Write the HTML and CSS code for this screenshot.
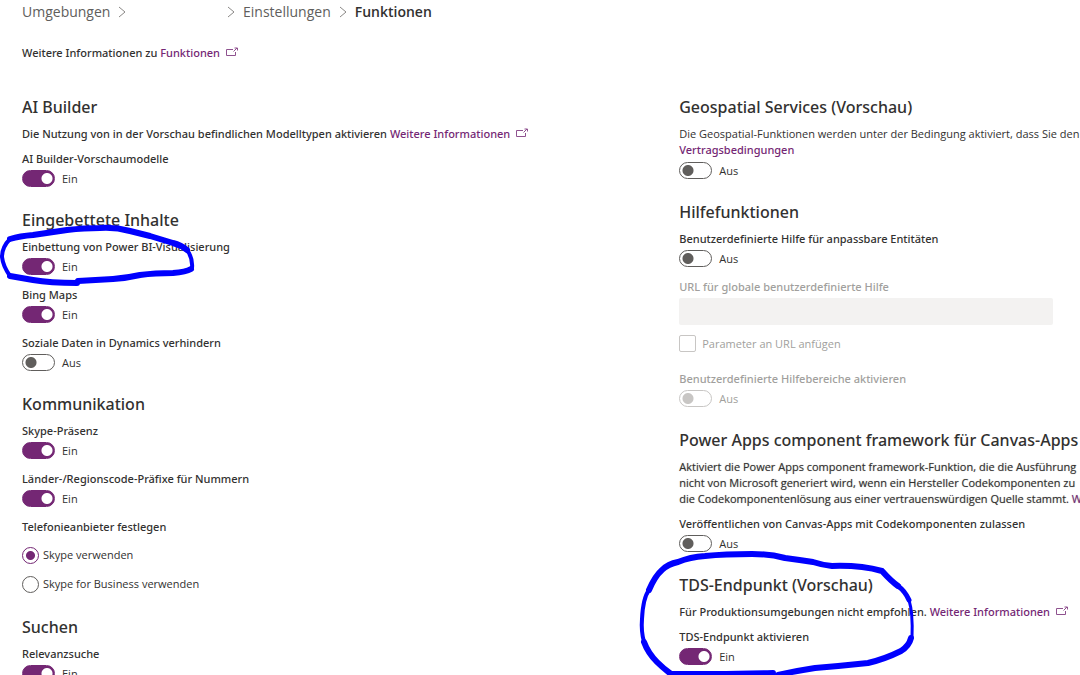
FILE: index.html
```html
<!DOCTYPE html>
<html lang="de">
<head>
<meta charset="utf-8">
<title>Funktionen</title>
<link rel="stylesheet" href="styles.css">
</head>
<body>
<svg class="sprite" aria-hidden="true">
  <symbol id="open" viewBox="0 0 12 10"><path d="M7 2.500H.5v6h9V5M7.500 4.500l3.500-3.500M8.500 1H11.500V3.500" fill="none" stroke="currentColor"/></symbol>
  <symbol id="chevron" viewBox="0 0 8 12"><path d="M1 1l6 5-6 5" fill="none" stroke="currentColor"/></symbol>
</svg>
<div class="page">
  <nav class="breadcrumb" aria-label="Navigationspfad">
    <span class="crumb crumb-env"><a href="#">Umgebungen</a><svg class="chevron"><use href="#chevron"/></svg></span>
    <svg class="chevron"><use href="#chevron"/></svg>
    <a href="#">Einstellungen</a>
    <svg class="chevron"><use href="#chevron"/></svg>
    <strong class="current">Funktionen</strong>
  </nav>
  <p class="intro">Weitere Informationen zu <a href="#">Funktionen<svg class="open"><use href="#open"/></svg></a></p>

  <main class="columns">
    <div class="column">
      <section>
        <h2>AI Builder</h2>
        <p class="desc">Die Nutzung von in der Vorschau befindlichen Modelltypen aktivieren <a href="#">Weitere Informationen<svg class="open"><use href="#open"/></svg></a></p>
        <div class="setting"><label for="ai">AI Builder-Vorschaumodelle</label><div class="switch"><input id="ai" type="checkbox" role="switch" checked><span>Ein</span></div></div>
      </section>
      <section class="marked">
        <h2>Eingebettete Inhalte</h2>
        <div class="setting"><label for="bi">Einbettung von Power BI-Visualisierung</label><div class="switch"><input id="bi" type="checkbox" role="switch" checked><span>Ein</span></div></div>
        <div class="setting"><label for="bing">Bing Maps</label><div class="switch"><input id="bing" type="checkbox" role="switch" checked><span>Ein</span></div></div>
        <div class="setting"><label for="social">Soziale Daten in Dynamics verhindern</label><div class="switch"><input id="social" type="checkbox" role="switch"><span>Aus</span></div></div>
        <svg class="ink ink-embed" viewBox="0 0 200 64" aria-hidden="true">
          <path d="M77 61Q50 61 33 58L10 54" stroke-width="6"/>
          <path d="M10 54Q3 44 2 35Q2 25 10 17" stroke-width="4"/>
          <path d="M10 17Q20 14 33 13L67 8Q85 6 100 6Q115 5 130 9L150 14L173 21Q181 23 187 28" stroke-width="6"/>
          <path d="M187 28Q193 36 192 46" stroke-width="4"/>
          <path d="M191 47Q186 50 173 51Q155 51 140 53Q127 56 113 57L78 59" stroke-width="6"/>
        </svg>
      </section>
      <section>
        <h2>Kommunikation</h2>
        <div class="setting"><label for="skype">Skype-Präsenz</label><div class="switch"><input id="skype" type="checkbox" role="switch" checked><span>Ein</span></div></div>
        <div class="setting"><label for="prefix">Länder-/Regionscode-Präfixe für Nummern</label><div class="switch"><input id="prefix" type="checkbox" role="switch" checked><span>Ein</span></div></div>
        <fieldset>
          <legend>Telefonieanbieter festlegen</legend>
          <label class="option"><input type="radio" name="phone" checked>Skype verwenden</label>
          <label class="option"><input type="radio" name="phone">Skype for Business verwenden</label>
        </fieldset>
      </section>
      <section>
        <h2>Suchen</h2>
        <div class="setting"><label for="search">Relevanzsuche</label><div class="switch"><input id="search" type="checkbox" role="switch" checked><span>Ein</span></div></div>
      </section>
    </div>

    <div class="column">
      <section>
        <h2>Geospatial Services (Vorschau)</h2>
        <p class="desc desc-light">Die Geospatial-Funktionen werden unter der Bedingung aktiviert, dass Sie den<br><a href="#">Vertragsbedingungen</a></p>
        <div class="switch"><input type="checkbox" role="switch" aria-label="Geospatial Services"><span>Aus</span></div>
      </section>
      <section>
        <h2>Hilfefunktionen</h2>
        <div class="setting"><label for="help">Benutzerdefinierte Hilfe für anpassbare Entitäten</label><div class="switch"><input id="help" type="checkbox" role="switch"><span>Aus</span></div></div>
        <div class="setting disabled"><label for="url">URL für globale benutzerdefinierte Hilfe</label><input class="field" id="url" type="text" disabled></div>
        <label class="check disabled"><input type="checkbox" disabled>Parameter an URL anfügen</label>
        <div class="setting disabled"><label for="panes">Benutzerdefinierte Hilfebereiche aktivieren</label><div class="switch"><input id="panes" type="checkbox" role="switch" disabled><span>Aus</span></div></div>
      </section>
      <section>
        <h2>Power Apps component framework für Canvas-Apps</h2>
        <p class="desc desc-long">Aktiviert die Power Apps component framework-Funktion, die die Ausführung<br>nicht von Microsoft generiert wird, wenn ein Hersteller Codekomponenten zu<br>die Codekomponentenlösung aus einer vertrauenswürdigen Quelle stammt. <a href="#">W</a></p>
        <div class="setting"><label for="publish">Veröffentlichen von Canvas-Apps mit Codekomponenten zulassen</label><div class="switch"><input id="publish" type="checkbox" role="switch"><span>Aus</span></div></div>
      </section>
      <section class="marked">
        <h2>TDS-Endpunkt (Vorschau)</h2>
        <p class="desc">Für Produktionsumgebungen nicht empfohlen. <a href="#">Weitere Informationen<svg class="open"><use href="#open"/></svg></a></p>
        <div class="setting"><label for="tds">TDS-Endpunkt aktivieren</label><div class="switch"><input id="tds" type="checkbox" role="switch" checked><span>Ein</span></div></div>
        <svg class="ink ink-tds" viewBox="0 0 280 130" aria-hidden="true">
          <path d="M14 41Q20 27 27 21Q33 15 43 13Q55 8 70 7Q90 5 117 5Q135 5 150 9Q165 11 178 13Q187 16 197 17Q225 16 247 22Q256 32 263 37" stroke-width="6"/>
          <path d="M263 37Q270 42 274 51" stroke-width="5"/>
          <path d="M274 51Q278 64 277 88" stroke-width="3"/>
          <path d="M276 89Q274 97 266 102Q250 110 233 114Q205 117 180 119Q160 122 143 126" stroke-width="6"/>
          <path d="M14 41Q8 49 7 70Q6 82 9 93" stroke-width="4"/>
          <path d="M9 93Q13 104 22 113Q28 119 36 125L80 125Q105 125 138 124" stroke-width="6"/>
        </svg>
      </section>
    </div>
  </main>
</div>
</body>
</html>
```
FILE: styles.css
```css
* { box-sizing: border-box; }
body { margin: 0; background: #fff; color: #323130; font: 500 11px/16px "Noto Sans", "Open Sans", sans-serif; }
.sprite { position: absolute; width: 0; height: 0; }
.page { height: 100vh; overflow: hidden; padding-left: 22px; }
a { color: #742774; text-decoration: none; }
p, h2 { margin: 0; }
.breadcrumb { display: flex; align-items: center; gap: 8px; height: 24px; font-family: "Open Sans", sans-serif; font-size: 14px; line-height: 24px; font-weight: 400; }
.breadcrumb a { color: #605e5c; }
.crumb { display: flex; align-items: center; gap: 8px; }
.crumb-env { width: 197px; }
.chevron { width: 8px; height: 12px; color: #8a8886; flex: none; }
.current { font-weight: 600; }
.intro { margin: 21px 0 34px; }
.open { width: 12px; height: 10px; margin-left: 6px; opacity: 0.8; }
.columns { display: grid; grid-template-columns: minmax(0, 1.64fr) minmax(0, 1fr); }
.column { display: flex; flex-direction: column; gap: 21px; white-space: nowrap; }
h2 { font-size: 16px; line-height: 24px; font-weight: 500; margin-bottom: 7px; }
.desc { margin-bottom: 9px; }
.desc-light { font-family: "Open Sans", sans-serif; font-weight: 400; margin-bottom: 4px; }
.desc-light a { font-family: "Noto Sans", sans-serif; font-weight: 500; }
.desc-long { font-family: "Open Sans", sans-serif; font-weight: 400; text-shadow: 0 0 1px #a19f9d; }
.setting label { display: block; margin-bottom: 3px; }
.setting + .setting, .setting + fieldset { margin-top: 12px; }
.switch { display: flex; align-items: center; gap: 7px; height: 17px; font-family: "Open Sans", sans-serif; font-weight: 400; }
input { appearance: none; margin: 0; flex: none; }
.switch input { width: 33px; height: 17px; border: 1px solid #605e5c; border-radius: 9px; background: radial-gradient(circle at 8px 50%, #605e5c 5px, transparent 6px); }
.switch input:checked { border-color: #742774; background: radial-gradient(circle at 24px 50%, #fff 5px, #742774 6px); }
.switch input:disabled { border-color: #c8c6c4; background: radial-gradient(circle at 8px 50%, #c8c6c4 5px, transparent 6px); }
fieldset { border: 0; margin: 0; padding: 0 0 1px; }
legend { padding: 0; }
.option, .check { display: flex; align-items: center; font-family: "Open Sans", sans-serif; font-weight: 400; }
.option { gap: 4px; height: 18px; margin-top: 11px; }
.option input { width: 17px; height: 17px; border: 1px solid #605e5c; border-radius: 50%; }
.option input:checked { border-color: #742774; background: radial-gradient(circle, #742774 4px, transparent 5px); }
.disabled { color: #a19f9d; }
.field { display: block; width: calc(100% - 27px); height: 27px; border: 0; border-radius: 2px; background: #f3f2f1; }
.check { gap: 6px; height: 17px; margin: 10px 0 19px; }
.check input { width: 17px; height: 17px; border: 1px solid #c8c6c4; border-radius: 2px; }

/* Pen marks drawn over the highlighted settings */
.marked { position: relative; }
.ink { position: absolute; fill: none; stroke: #0000fe; stroke-linejoin: round; stroke-linecap: round; pointer-events: none; }
.ink-embed { left: -22px; top: 14px; width: 200px; height: 64px; }
.ink-tds { left: -44px; top: -24px; width: 280px; height: 130px; }
```
